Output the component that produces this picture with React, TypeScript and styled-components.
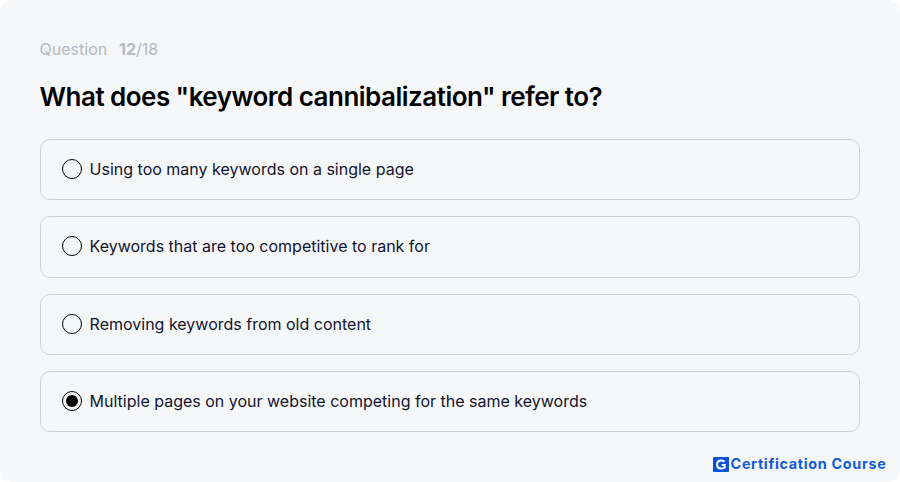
import React, { useState } from "react";
import styled, { createGlobalStyle } from "styled-components";

const GlobalStyle = createGlobalStyle`
  * { box-sizing: border-box; }
  body { margin: 0; background: #ffffff; }
`;

const Card = styled.main`
  display: flex;
  flex-direction: column;
  width: 900px;
  height: 482px;
  padding: 37px 14px 8px 39.6px;
  border-radius: 12px;
  background: #f6f7f9;
  font-family: Inter, sans-serif;
`;

const Progress = styled.div`
  display: flex;
  height: 24px;
  font-size: 16px;
  line-height: 24px;
  color: #b5b9c4;
`;

const ProgressLabel = styled.span`
  width: 79.4px;
`;

const Title = styled.h1`
  margin: 19px 0 0;
  height: 34px;
  font-size: 26px;
  line-height: 34px;
  font-weight: 600;
  letter-spacing: -0.5px;
  word-spacing: -0.2px;
  white-space: nowrap;
  color: #000000;
`;

const Options = styled.div`
  display: flex;
  flex-direction: column;
  gap: 16px;
  width: 820px;
  margin: 25px 0 0 0.4px;
`;

const Option = styled.label`
  display: flex;
  align-items: center;
  height: 61.33px;
  padding: 0 21px 1.3px;
  border: 1px solid #d1d3d7;
  border-radius: 10px;
  font-size: 16px;
  line-height: 24px;
  color: #11142d;
`;

const Radio = styled.input`
  appearance: none;
  display: grid;
  place-items: center;
  flex: none;
  width: 20px;
  height: 20px;
  margin: 0 7.6px 0 0;
  border: 1px solid #000000;
  border-radius: 50%;

  &:checked::before {
    content: "";
    width: 12px;
    height: 12px;
    border-radius: 50%;
    background: #000000;
  }
`;

const Footer = styled.footer`
  display: flex;
  justify-content: flex-end;
  align-items: center;
  gap: 2px;
  height: 20px;
  margin-top: auto;
`;

const LogoMark = styled.svg`
  width: 16px;
  height: 15px;
`;

const CourseName = styled.span`
  font-size: 14.4px;
  line-height: 20px;
  font-weight: 700;
  letter-spacing: 0.67px;
  margin-right: -0.5px;
  color: #125bd9;
`;

const answers = [
  "Using too many keywords on a single page",
  "Keywords that are too competitive to rank for",
  "Removing keywords from old content",
  "Multiple pages on your website competing for the same keywords",
];

export default function App() {
  const [selected, setSelected] = useState(3);
  return (
    <>
      <GlobalStyle />
      <Card>
        <Progress>
          <ProgressLabel>Question</ProgressLabel>
          <span><b>12</b>/18</span>
        </Progress>
        <Title>What does "keyword cannibalization" refer to?</Title>
        <Options>
          {answers.map((answer, i) => (
            <Option key={answer}>
              <Radio type="radio" name="answer" checked={selected === i} onChange={() => setSelected(i)} />
              {answer}
            </Option>
          ))}
        </Options>
        <Footer>
          <LogoMark viewBox="0 0 16 15" aria-hidden="true">
            <rect width="16" height="15" rx="0.8" fill="#0b55d4" />
            <path d="M11.4 4.8C10.6 4 9.6 3.6 8.4 3.6C5.9 3.6 4.1 5.2 4.1 7.6S5.9 11.6 8.4 11.6C9.7 11.6 10.8 11.2 11.7 10.5V7.9H8.6" fill="none" stroke="#ffffff" strokeWidth="2" />
          </LogoMark>
          <CourseName>Certification Course</CourseName>
        </Footer>
      </Card>
    </>
  );
}
